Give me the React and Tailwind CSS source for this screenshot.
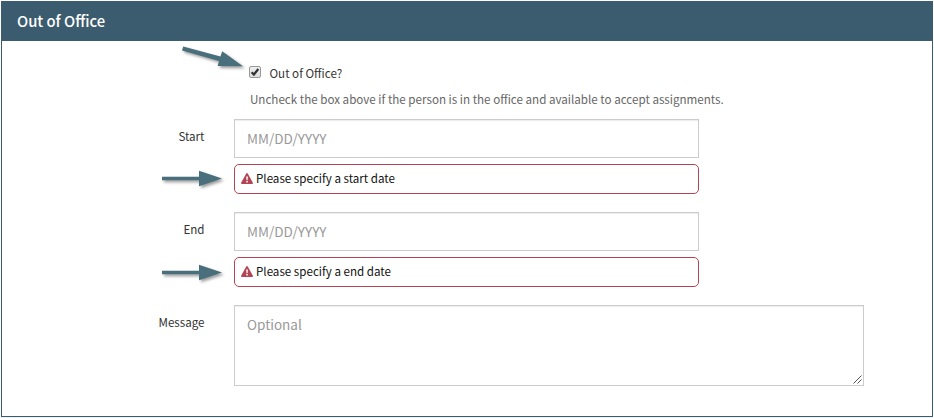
const FONT = "font-['Noto_Sans_CJK_SC',sans-serif]";

const STRAIGHT = "M0 6.8H37V0.8L60 8.4L37 16.2V10.2H0Z";
const SLANTED = "M1.2 0.6L38.4 10.6L40.2 5.2L61 20.2L35.6 20L37 15L0 4.6Z";

function Arrow({ className, d = STRAIGHT }) {
  return (
    <svg
      className={`absolute overflow-visible drop-shadow-[2px_2px_1.5px_rgba(0,0,0,0.4)] ${className}`}
      width="62"
      height="22"
      viewBox="0 0 62 22"
    >
      <path d={d} fill="#4a6f7c" />
    </svg>
  );
}

function Warning() {
  return (
    <svg className="-mt-px h-[11px] w-3 shrink-0" viewBox="0 0 12 11">
      <path d="M5.3 0.4Q6 -0.4 6.7 0.4L11.9 9.8Q12.2 11 11 11H1Q-0.2 11 0.1 9.8Z" fill="#b34454" />
      <path d="M5.2 3.4H6.9L6.6 7.2H5.5ZM5.3 8H6.8V9.5H5.3Z" fill="#fff" />
    </svg>
  );
}

function DateField({ label, error }) {
  return (
    <div className="flex h-[93px] items-start">
      <label className="w-[202.5px] pt-2 text-right text-[11.6px] leading-[18px] text-[#333]">{label}</label>
      <div className="ml-[29.5px] w-[465px]">
        <div className="h-[39px] border border-[#ccc] pl-3 text-[13.5px] leading-[36px] text-[#999] shadow-[inset_0_1px_1px_rgba(0,0,0,0.075)]">
          MM/DD/YYYY
        </div>
        <div className="mt-[6px] flex h-[30px] items-start gap-[3.5px] rounded-[5px] border border-[#b34454] pl-[5.5px] text-[11.6px] leading-[26px] text-[#111]">
          <span className="flex h-[28px] items-center">
            <Warning />
          </span>
          <span>{error}</span>
        </div>
      </div>
    </div>
  );
}

export default function App() {
  return (
    <div className={`relative h-[418px] w-[934px] overflow-hidden bg-white p-px ${FONT}`}>
      <section className="h-[416px] w-[932px] border border-[#3b5b6e] bg-white shadow-[0_1px_1px_rgba(0,0,0,0.05)]">
        <header className="-mx-px -mt-px h-10 bg-[#3b5b6e] pl-4 text-[14.8px] font-medium leading-[40px] text-white">
          Out of Office
        </header>
        <div className="pl-[247px]">
          <div className="flex h-[45px] items-start pt-6">
            <span className="mt-px flex h-3 w-3 items-center justify-center rounded-[2px] border border-[#999] bg-gradient-to-b from-[#eee] to-[#ddd]">
              <svg width="10" height="10" viewBox="0 0 10 10">
                <path d="M1.6 5.2L3.9 7.5L8.3 2" fill="none" stroke="#333" strokeWidth="2.2" />
              </svg>
            </span>
            <span className="ml-[8.5px] text-[11.6px] leading-[16px] text-[#333]">Out of Office?</span>
          </div>
          <p className="h-[33px] pl-px pt-1 text-[11.62px] leading-[18px] text-[#666]">
            Uncheck the box above if the person is in the office and available to accept assignments.
          </p>
        </div>
        <DateField label="Start" error="Please specify a start date" />
        <DateField label="End" error="Please specify a end date" />
        <div className="flex items-start">
          <label className="w-[202.5px] pt-2 text-right text-[11.6px] leading-[18px] text-[#333]">Message</label>
          <div className="relative ml-[29.5px] h-[81px] w-[630px] border border-[#ccc] pl-3 text-[13.5px] leading-[36px] text-[#999] shadow-[inset_0_1px_1px_rgba(0,0,0,0.075)]">
            Optional
            <svg className="absolute bottom-px right-px" width="9" height="9" viewBox="0 0 9 9">
              <path d="M0.5 8.5L8.5 0.5M4.5 8.5L8.5 4.5" fill="none" stroke="#555" />
            </svg>
          </div>
        </div>
      </section>
      <Arrow className="left-[182px] top-[46px]" d={SLANTED} />
      <Arrow className="left-[162px] top-[170px]" />
      <Arrow className="left-[162px] top-[264px]" />
    </div>
  );
}
